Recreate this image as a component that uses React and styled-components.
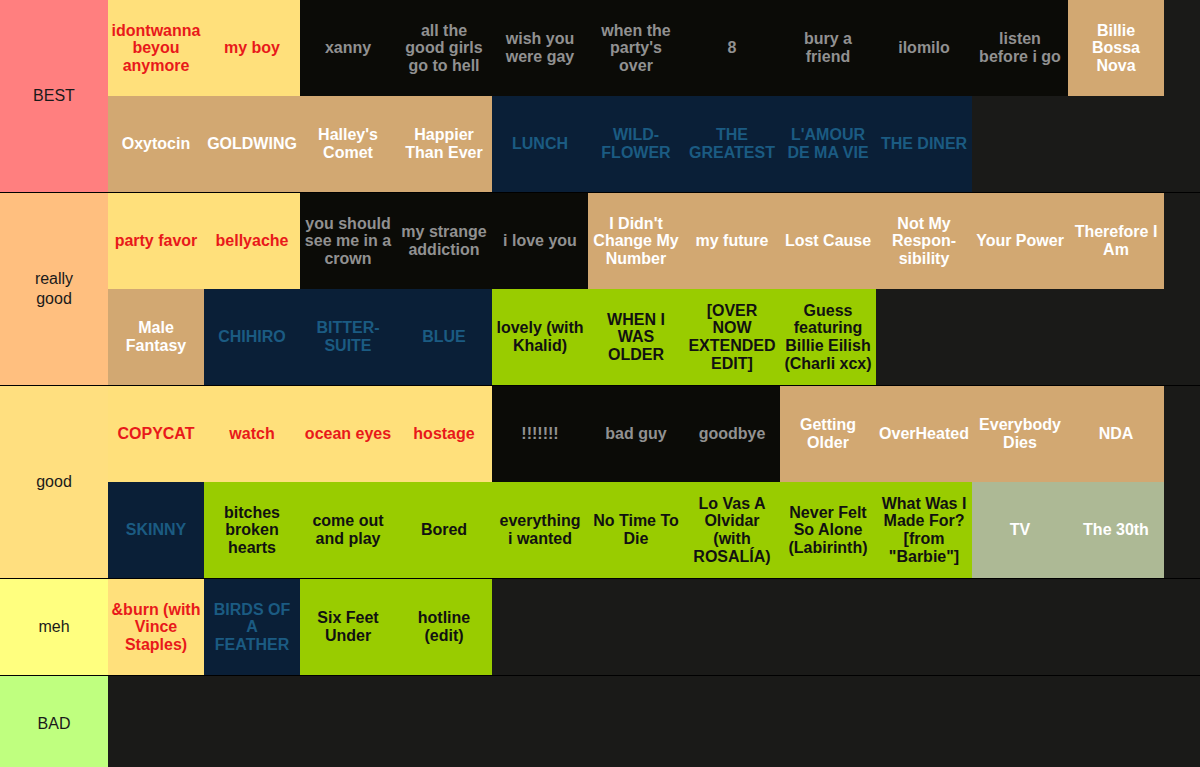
import React from "react";
import styled, { createGlobalStyle } from "styled-components";

const GlobalStyle = createGlobalStyle`
    html, body {
        margin: 0;
        padding: 0;
        background: #1a1a18;
        font-family: "Liberation Sans", Arial, sans-serif;
    }
`;

const kinds = {
    y: { bg: "#ffe07b", fg: "#e8191a" },
    k: { bg: "#0b0b07", fg: "#919191" },
    t: { bg: "#d2a872", fg: "#ffffff" },
    n: { bg: "#0a1f37", fg: "#1b5b82" },
    g: { bg: "#99cc00", fg: "#111111" },
    s: { bg: "#adb995", fg: "#ffffff" },
};

const tiers = [
    {
        name: "BEST",
        color: "#ff7f7f",
        songs: [
            ["idontwanna beyou anymore", "y"], ["my boy", "y"], ["xanny", "k"],
            ["all the\ngood girls\ngo to hell", "k"], ["wish you were gay", "k"],
            ["when the party's over", "k"], ["8", "k"], ["bury a friend", "k"],
            ["ilomilo", "k"], ["listen before i go", "k"], ["Billie Bossa Nova", "t"],
            ["Oxytocin", "t"], ["GOLDWING", "t"], ["Halley's Comet", "t"],
            ["Happier Than Ever", "t"], ["LUNCH", "n"], ["WILD-\nFLOWER", "n"],
            ["THE GREATEST", "n"], ["L'AMOUR DE MA VIE", "n"], ["THE DINER", "n"],
        ],
    },
    {
        name: "really good",
        color: "#ffbf7f",
        songs: [
            ["party favor", "y"], ["bellyache", "y"], ["you should see me in a crown", "k"],
            ["my strange addiction", "k"], ["i love you", "k"],
            ["I Didn't Change My Number", "t"], ["my future", "t"], ["Lost Cause", "t"],
            ["Not My\nRespon-\nsibility", "t"], ["Your Power", "t"], ["Therefore I Am", "t"],
            ["Male Fantasy", "t"], ["CHIHIRO", "n"], ["BITTER-\nSUITE", "n"], ["BLUE", "n"],
            ["lovely (with Khalid)", "g"], ["WHEN I\nWAS\nOLDER", "g"],
            ["[OVER\nNOW\nEXTENDED\nEDIT]", "g"],
            ["Guess featuring Billie Eilish (Charli xcx)", "g"],
        ],
    },
    {
        name: "good",
        color: "#ffdf7f",
        songs: [
            ["COPYCAT", "y"], ["watch", "y"], ["ocean eyes", "y"], ["hostage", "y"],
            ["!!!!!!!", "k"], ["bad guy", "k"], ["goodbye", "k"],
            ["Getting Older", "t"], ["OverHeated", "t"], ["Everybody Dies", "t"], ["NDA", "t"],
            ["SKINNY", "n"], ["bitches broken hearts", "g"], ["come out and play", "g"],
            ["Bored", "g"], ["everything\ni wanted", "g"], ["No Time To Die", "g"],
            ["Lo Vas A Olvidar (with ROSALÍA)", "g"], ["Never Felt So Alone (Labirinth)", "g"],
            ["What Was I Made For? [from \"Barbie\"]", "g"], ["TV", "s"], ["The 30th", "s"],
        ],
    },
    {
        name: "meh",
        color: "#ffff7f",
        songs: [
            ["&burn (with Vince Staples)", "y"], ["BIRDS OF A FEATHER", "n"],
            ["Six Feet Under", "g"], ["hotline (edit)", "g"],
        ],
    },
    {
        name: "BAD",
        color: "#bfff7f",
        songs: [],
    },
];

const Board = styled.div`
    display: flex;
    flex-direction: column;
    width: 1200px;
    background: #1a1a18;
`;

const Tier = styled.div`
    display: flex;
    border-bottom: 1px solid #000;
    min-height: 96px;
`;

const Label = styled.div`
    flex: 0 0 108px;
    display: flex;
    align-items: center;
    justify-content: center;
    text-align: center;
    padding: 0 16px;
    box-sizing: border-box;
    background: ${props => props.color};
    color: #1a1a1a;
    font-size: 16px;
    line-height: 20px;
`;

const Tiles = styled.div`
    width: 1056px;
    display: flex;
    flex-wrap: wrap;
    align-content: flex-start;
`;

const Tile = styled.div`
    width: 96px;
    height: 96px;
    box-sizing: border-box;
    padding: 0 3.35px;
    display: flex;
    align-items: center;
    justify-content: center;
    text-align: center;
    white-space: pre-line;
    font-weight: bold;
    font-size: 16px;
    line-height: 17.6px;
    background: ${props => kinds[props.kind].bg};
    color: ${props => kinds[props.kind].fg};
`;

const App = () => {
    return (
        <>
            <GlobalStyle/>
            <Board>
                {tiers.map(tier => (
                    <Tier key={tier.name}>
                        <Label color={tier.color}>{tier.name}</Label>
                        <Tiles>
                            {tier.songs.map(([title, kind]) => (
                                <Tile key={title} kind={kind}>{title}</Tile>
                            ))}
                        </Tiles>
                    </Tier>
                ))}
            </Board>
        </>
    );
};

export default App;
